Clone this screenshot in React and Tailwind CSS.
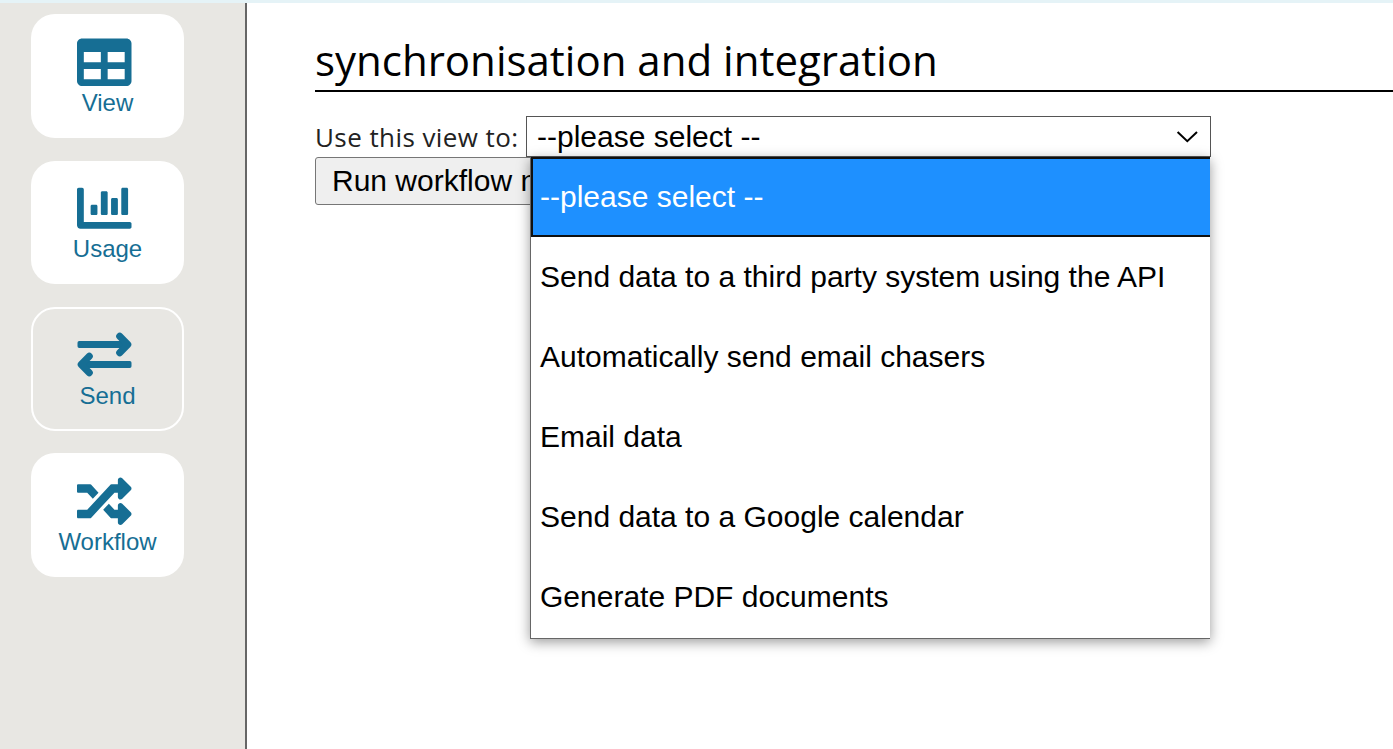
import { FaTable, FaChartBar, FaRandom } from "react-icons/fa";

function ExchangeIcon() {
  return (
    <svg viewBox="0 0 54 46" className="h-[46px] w-[55px]" fill="none" stroke="currentColor">
      <path d="M3.4 12.5H49M5 32.5H50.6" strokeWidth="6.8" />
      <path d="M1.7 10.8v3.4h2v-3.4zM52.3 30.8v3.4h-2v-3.4z" strokeWidth="3.4" strokeLinejoin="round" />
      <path d="M42.2 4.2L50.3 12.5L42.2 20.8M11.8 24.2L3.7 32.5L11.8 40.8" strokeWidth="7" strokeLinecap="round" strokeLinejoin="round" />
    </svg>
  );
}

const items = [
  { label: "View", icon: <FaTable size={54.5} />, box: "h-[124px] bg-white pt-[21px]" },
  { label: "Usage", icon: <FaChartBar size={54.5} />, box: "mt-[23px] h-[123px] bg-white pt-[20px]" },
  { label: "Send", icon: <ExchangeIcon />, box: "mt-[23px] h-[124px] border-2 border-white pt-[19px]" },
  { label: "Workflow", icon: <FaRandom size={54.5} />, box: "mt-[22px] h-[124px] bg-white pt-[21px]" },
];

const options = [
  "Send data to a third party system using the API",
  "Automatically send email chasers",
  "Email data",
  "Send data to a Google calendar",
  "Generate PDF documents",
];

export default function App() {
  return (
    <div className="flex h-[749px] w-[1393px] flex-col overflow-hidden bg-white font-['Liberation_Sans',sans-serif] text-black">
      <div className="h-[3px] shrink-0 bg-[#e5f3f7]" />
      <div className="flex flex-1">
        <nav className="w-[247px] shrink-0 border-r-2 border-[#666] bg-[#e8e7e3] pl-[31px] pt-[11px]">
          {items.map((item) => (
            <button
              key={item.label}
              className={`flex w-[153px] flex-col items-center justify-start rounded-[24px] text-[#166e94] ${item.box}`}
            >
              <span className="flex h-[54px] items-center pr-[6px]">{item.icon}</span>
              <span className="text-2xl leading-[28px]">{item.label}</span>
            </button>
          ))}
        </nav>
        <main className="flex-1 pl-[68px] pt-[27px]">
          <h1 className="h-[62px] whitespace-nowrap border-b-2 border-black font-['Open_Sans',sans-serif] text-[42px] leading-[59px]">
            synchronisation and integration
          </h1>
          <div className="mt-[24px] flex h-[41px]">
            <label className="w-[211px] whitespace-nowrap font-['Open_Sans',sans-serif] text-[26px] leading-[43px] tracking-[0.42px] text-[#222]">
              Use this view to:
            </label>
            <div className="relative flex h-[41px] w-[685px] items-center justify-between border border-[#555] pl-[10px] pr-[12px]">
              <span className="text-[30px] leading-[40px]">--please select --</span>
              <svg className="h-[12px] w-[22px]" viewBox="0 0 22 12" fill="none" stroke="black" strokeWidth="2">
                <path d="M1.6 1L11.3 10.2L21 1" />
              </svg>
              <div className="absolute left-[3px] top-[40px] h-[482px] w-[680px] border-b border-l border-[#666] bg-white text-[30px] shadow-[0_3px_12px_rgba(0,0,0,0.4)]">
                <div className="h-[80px] border-y-2 border-l-2 border-[#101010] bg-[#1e90ff] pl-[7px] leading-[75px] text-white">
                  --please select --
                </div>
                {options.map((option) => (
                  <div key={option} className="h-[80px] whitespace-nowrap pl-[9px] leading-[79px]">
                    {option}
                  </div>
                ))}
              </div>
            </div>
          </div>
          <button className="h-[48px] w-[260px] overflow-hidden whitespace-nowrap rounded-[3px] border border-[#767676] bg-[#efefef] pl-[16px] text-left text-[30px] leading-[46px]">
            Run workflow now
          </button>
        </main>
      </div>
    </div>
  );
}
